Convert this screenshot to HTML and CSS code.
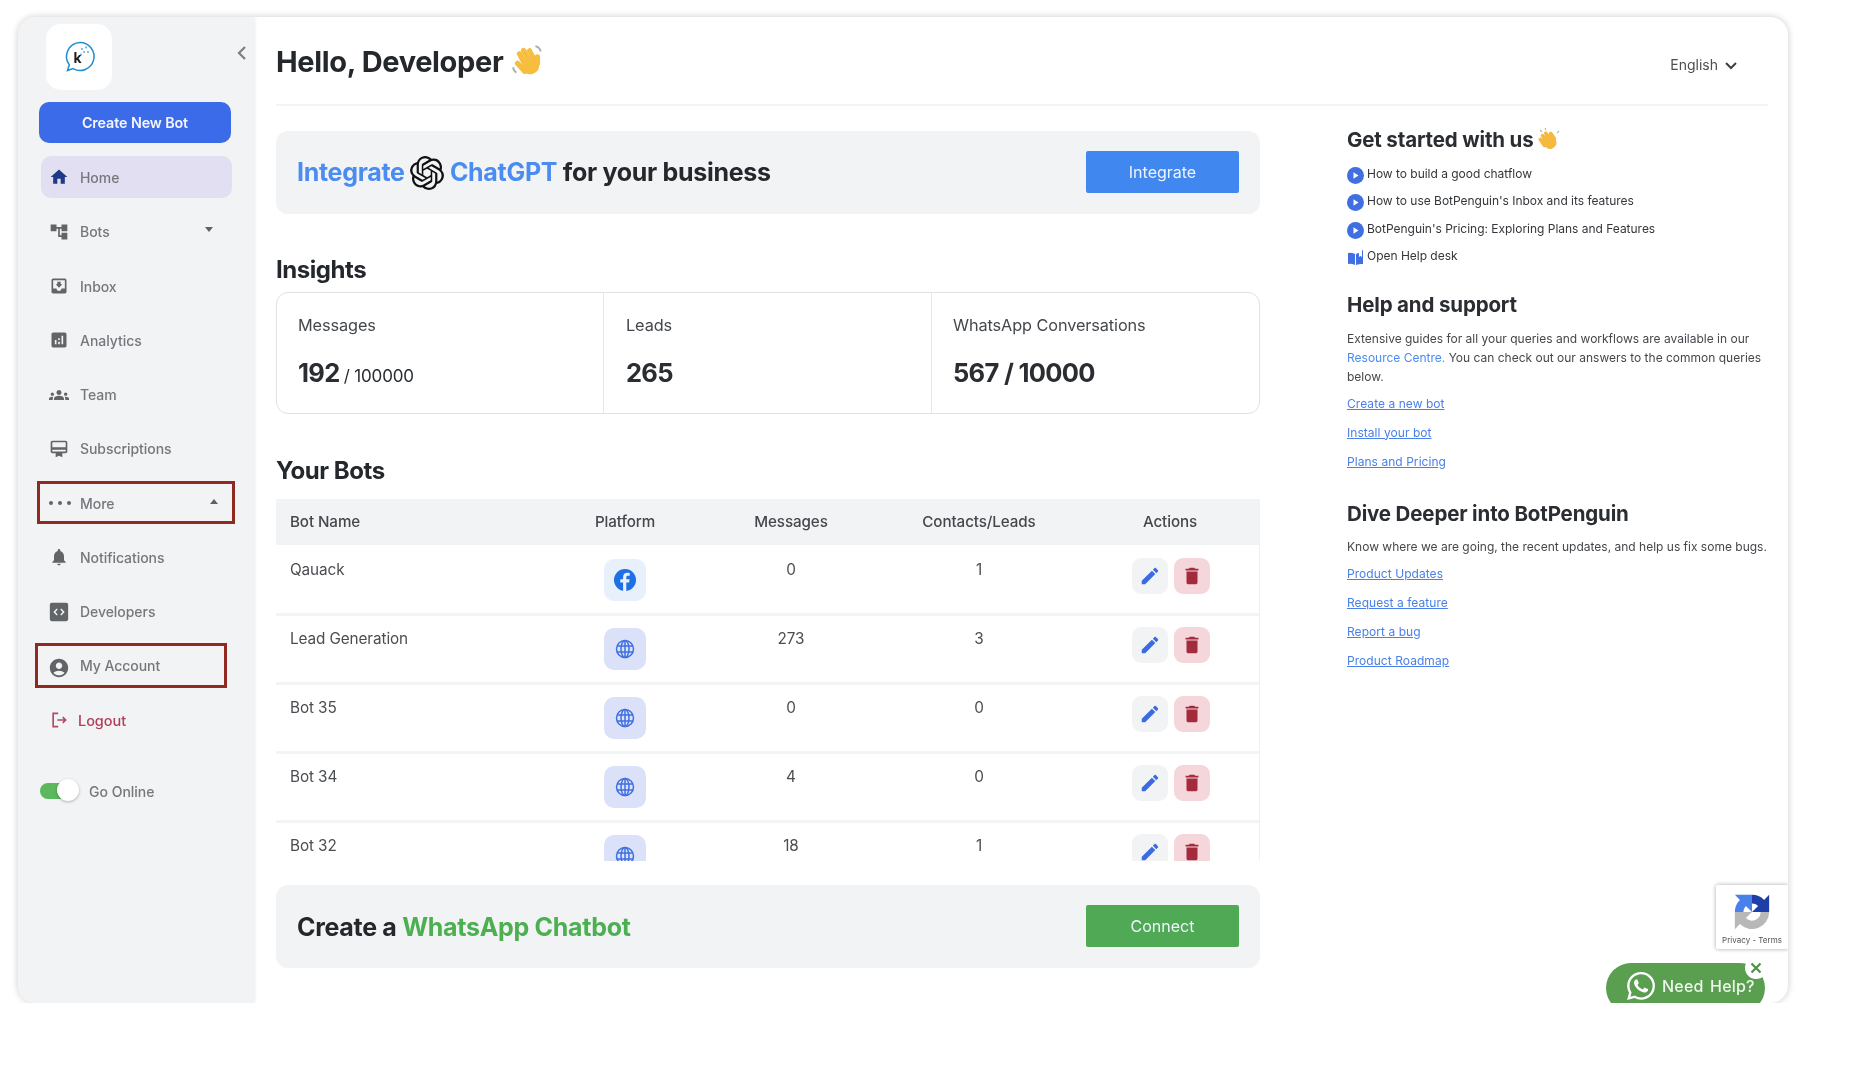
FILE: index.html
```html
<!DOCTYPE html>
<html lang="en">
<head>
<meta charset="utf-8">
<title>BotPenguin dashboard</title>
<link rel="stylesheet" href="styles.css">
</head>
<body>
<div class="window">
  <aside class="sidebar">
    <div class="logo-row">
      <div class="logo">
        <svg width="36" height="36" viewBox="0 0 36 36"><path d="M19 3.500a14 14 0 1 1-7 26.100L6.500 31.500l1.800-5.700A14 14 0 0 1 19 3.500z" fill="none" stroke="#1f8ecf" stroke-width="1.500"/><text x="12.500" y="24" class="logo-k">k</text><g fill="#4aa3df"><circle cx="21" cy="10" r=".9"/><circle cx="25" cy="8.500" r=".9"/><circle cx="23" cy="13" r=".9"/><circle cx="27" cy="13" r=".9"/><circle cx="20" cy="15.500" r=".9"/></g></svg>
      </div>
      <svg class="collapse" width="12" height="16" viewBox="0 0 12 16"><path d="M9 2 3 8l6 6" fill="none" stroke="#7b7e82" stroke-width="2.200"/></svg>
    </div>
    <button class="create">Create New Bot</button>
    <nav class="nav">
      <a class="item active"><svg class="ico" viewBox="0 0 24 24"><path d="M10 20v-6h4v6h5v-8h3L12 3 2 12h3v8z"/></svg><span>Home</span></a>
      <a class="item"><svg class="ico" viewBox="0 0 24 24"><path d="M22 11V3h-7v3H9V3H2v8h7V8h2v10h4v3h7v-8h-7v3h-2V8h2v3z"/></svg><span>Bots</span><i class="caret down"></i></a>
      <a class="item"><svg class="ico" viewBox="0 0 24 24"><path d="M19 3H4.990c-1.110 0-1.980.89-1.980 2L3 19c0 1.100.88 2 1.990 2H19c1.100 0 2-.9 2-2V5c0-1.110-.9-2-2-2zm0 12h-4c0 1.660-1.350 3-3 3s-3-1.340-3-3H4.990V5H19v10zm-3-5h-2V7h-4v3H8l4 4 4-4z"/></svg><span>Inbox</span></a>
      <a class="item"><svg class="ico" viewBox="0 0 24 24"><path d="M19 3H5c-1.100 0-2 .9-2 2v14c0 1.100.9 2 2 2h14c1.100 0 2-.9 2-2V5c0-1.100-.9-2-2-2zM9 17H7v-5h2v5zm4 0h-2v-3h2v3zm0-5h-2v-2h2v2zm4 5h-2V7h2v10z"/></svg><span>Analytics</span></a>
      <a class="item"><svg class="ico" viewBox="0 0 24 24"><path d="M12 12.750c1.630 0 3.070.39 4.240.9 1.080.48 1.760 1.560 1.760 2.730V18H6v-1.610c0-1.180.68-2.260 1.760-2.730 1.170-.52 2.610-.91 4.240-.91zM4 13c1.100 0 2-.9 2-2s-.9-2-2-2-2 .9-2 2 .9 2 2 2zm1.130 1.100c-.37-.06-.74-.1-1.130-.1-.99 0-1.930.21-2.780.58C.48 14.900 0 15.620 0 16.430V18h4.500v-1.610c0-.83.23-1.610.63-2.290zM20 13c1.100 0 2-.9 2-2s-.9-2-2-2-2 .9-2 2 .9 2 2 2zm4 3.430c0-.81-.48-1.530-1.220-1.850-.85-.37-1.790-.58-2.780-.58-.39 0-.76.04-1.130.1.4.68.63 1.460.63 2.290V18H24v-1.570zM12 6c1.660 0 3 1.340 3 3s-1.340 3-3 3-3-1.340-3-3 1.340-3 3-3z"/></svg><span>Team</span></a>
      <a class="item"><svg class="ico" viewBox="0 0 24 24"><path d="M20 2H4c-1.110 0-2 .89-2 2v11c0 1.110.89 2 2 2h4v5l4-2 4 2v-5h4c1.110 0 2-.89 2-2V4c0-1.110-.89-2-2-2zm0 13H4v-2h16v2zm0-5H4V4h16v6z"/></svg><span>Subscriptions</span></a>
      <a class="item"><span class="dots"><b></b><b></b><b></b></span><span>More</span><i class="caret up"></i></a>
      <a class="item"><svg class="ico" viewBox="0 0 24 24"><path d="M12 22c1.100 0 2-.9 2-2h-4c0 1.100.89 2 2 2zm6-6v-5c0-3.070-1.640-5.640-4.500-6.320V4c0-.83-.67-1.500-1.500-1.500s-1.500.67-1.500 1.500v.68C7.630 5.360 6 7.920 6 11v5l-2 2v1h16v-1l-2-2z"/></svg><span>Notifications</span></a>
      <a class="item"><svg class="ico big" viewBox="0 0 24 24"><path fill-rule="evenodd" d="M4 2h16a2 2 0 0 1 2 2v16a2 2 0 0 1-2 2H4a2 2 0 0 1-2-2V4a2 2 0 0 1 2-2zm6.600 7.400L9.500 8.300 5.800 12l3.700 3.700 1.100-1.100L8 12zm2.800 0L16 12l-2.600 2.600 1.100 1.100 3.700-3.700-3.700-3.700z"/></svg><span>Developers</span></a>
      <a class="item"><svg class="ico big shift" viewBox="0 0 24 24"><path d="M12 2C6.480 2 2 6.480 2 12s4.480 10 10 10 10-4.480 10-10S17.520 2 12 2zm0 4c1.930 0 3.500 1.570 3.500 3.500S13.930 13 12 13s-3.500-1.570-3.500-3.500S10.070 6 12 6zm0 14c-2.030 0-4.430-.82-6.140-2.880C7.550 15.800 9.680 15 12 15s4.450.8 6.140 2.120C16.430 19.180 14.030 20 12 20z"/></svg><span>My Account</span></a>
      <a class="item logout"><svg class="ico" viewBox="0 0 24 24"><path d="M11 4H5v16h6M10 12h10M16.500 8.500 20 12l-3.500 3.500" fill="none" stroke="#b04a60" stroke-width="2"/></svg><span>Logout</span></a>
    </nav>
    <div class="online"><span class="toggle"><i></i></span><span>Go Online</span></div>
    <div class="mark mark-more"></div>
    <div class="mark mark-account"></div>
  </aside>

  <main class="main">
    <header class="top">
      <h1>Hello, Developer
        <svg class="wave" width="36" height="36" viewBox="0 0 34 34"><g transform="rotate(-28 17 19)" fill="#f7bd3f"><rect x="7" y="12" width="5" height="15" rx="2.500" transform="rotate(-14 9 20)"/><rect x="11.500" y="5" width="5" height="18" rx="2.500"/><rect x="16.500" y="4" width="5" height="19" rx="2.500"/><rect x="21.500" y="7" width="4.600" height="16" rx="2.300"/><rect x="10" y="15" width="16" height="15" rx="7"/><rect x="24" y="15" width="5" height="11" rx="2.500" transform="rotate(28 26 20)"/></g><path d="M24 3q4 1 5 5M3 23q0 3 3 5" fill="none" stroke="#a9adb3" stroke-width="1.800"/></svg>
      </h1>
      <div class="lang"><span>English</span><svg width="14" height="10" viewBox="0 0 14 10"><path d="m2 2 5 5 5-5" fill="none" stroke="#3d4044" stroke-width="2"/></svg></div>
    </header>
    <div class="columns">
      <section class="left">
        <div class="banner">
          <div class="banner-title"><span class="blue">Integrate</span> <svg class="gpt" width="34" height="34" viewBox="0 0 24 24"><path fill="#111" d="M22.282 9.821a5.985 5.985 0 0 0-.516-4.911 6.046 6.046 0 0 0-6.510-2.900A6.065 6.065 0 0 0 4.981 4.182a5.985 5.985 0 0 0-3.998 2.900 6.046 6.046 0 0 0 .743 7.097 5.980 5.980 0 0 0 .511 4.911 6.051 6.051 0 0 0 6.515 2.900A5.985 5.985 0 0 0 13.260 24a6.056 6.056 0 0 0 5.772-4.206 5.990 5.990 0 0 0 3.998-2.900 6.056 6.056 0 0 0-.748-7.073zM13.260 22.429a4.476 4.476 0 0 1-2.876-1.041l.142-.080 4.778-2.758a.795.795 0 0 0 .393-.681v-6.737l2.020 1.169a.071.071 0 0 1 .038.052v5.583a4.504 4.504 0 0 1-4.495 4.494zm-9.661-4.125a4.471 4.471 0 0 1-.535-3.014l.142.085 4.783 2.758a.771.771 0 0 0 .781 0l5.843-3.368v2.332a.080.080 0 0 1-.033.062L9.740 19.950a4.499 4.499 0 0 1-6.141-1.646zM2.341 7.896a4.485 4.485 0 0 1 2.366-1.973V11.600a.766.766 0 0 0 .388.677l5.814 3.354-2.020 1.169a.076.076 0 0 1-.071 0l-4.830-2.787A4.504 4.504 0 0 1 2.341 7.872zm16.596 3.856-5.833-3.388L15.119 7.200a.076.076 0 0 1 .071 0l4.830 2.791a4.494 4.494 0 0 1-.676 8.104v-5.677a.790.790 0 0 0-.407-.667zm2.011-3.023-.142-.085-4.774-2.782a.776.776 0 0 0-.785 0L9.409 9.230V6.897a.066.066 0 0 1 .028-.062l4.830-2.787a4.499 4.499 0 0 1 6.680 4.660zM8.307 12.863l-2.020-1.164a.080.080 0 0 1-.038-.057V6.074a4.499 4.499 0 0 1 7.376-3.454l-.142.081L8.704 5.459a.795.795 0 0 0-.393.681zm1.098-2.365 2.602-1.500 2.607 1.500v2.999l-2.597 1.500-2.607-1.500z"/></svg> <span class="blue">ChatGPT</span> for your business</div>
          <button class="btn btn-blue">Integrate</button>
        </div>

        <h2 class="sec sec-insights">Insights</h2>
        <div class="insights">
          <div class="cell"><div class="lbl">Messages</div><div class="val">192 <small>/ 100000</small></div></div>
          <div class="cell"><div class="lbl">Leads</div><div class="val">265</div></div>
          <div class="cell"><div class="lbl">WhatsApp Conversations</div><div class="val">567 / 10000</div></div>
        </div>

        <h2 class="sec sec-bots">Your Bots</h2>
        <div class="table">
          <div class="row head"><span class="name">Bot Name</span><span>Platform</span><span>Messages</span><span>Contacts/Leads</span><span class="act-h">Actions</span></div>

          <div class="row"><span class="name">Qauack</span>
            <span class="pf fb"><svg width="24" height="24" viewBox="0 0 24 24"><circle cx="12" cy="12" r="11" fill="#1f6fe5"/><path d="M13.300 23v-8.600h2.800l.5-3.200h-3.300V9.300c0-.9.4-1.600 1.700-1.600h1.700V5c-.8-.1-1.600-.2-2.400-.2-2.600 0-4.200 1.500-4.200 4.200v2.200H7.300v3.200h2.800V23z" fill="#e9f1fb"/></svg></span>
            <span>0</span><span>1</span>
            <span class="acts"><b class="ab edit"><svg width="22" height="22" viewBox="0 0 24 24"><path d="M3 17.250V21h3.750L17.810 9.940l-3.750-3.750L3 17.250zM20.710 7.040c.39-.39.39-1.020 0-1.410l-2.340-2.340c-.39-.39-1.020-.39-1.410 0l-1.830 1.830 3.750 3.750 1.830-1.830z"/></svg></b><b class="ab del"><svg width="22" height="22" viewBox="0 0 24 24"><path d="M6 19c0 1.100.9 2 2 2h8c1.100 0 2-.9 2-2V7H6v12zM19 4h-3.500l-1-1h-5l-1 1H5v2h14V4z"/></svg></b></span></div>

          <div class="row"><span class="name">Lead Generation</span>
            <span class="pf web"><svg width="20" height="20" viewBox="0 0 20 20"><g fill="none" stroke="#3f6fe0" stroke-width="1.500"><circle cx="10" cy="10" r="8.500"/><ellipse cx="10" cy="10" rx="4" ry="8.500"/><path d="M10 1.500v17M2 7h16M2 13h16"/></g></svg></span>
            <span>273</span><span>3</span>
            <span class="acts"><b class="ab edit"><svg width="22" height="22" viewBox="0 0 24 24"><path d="M3 17.250V21h3.750L17.810 9.940l-3.750-3.750L3 17.250zM20.710 7.040c.39-.39.39-1.020 0-1.410l-2.340-2.340c-.39-.39-1.020-.39-1.410 0l-1.830 1.830 3.750 3.750 1.830-1.830z"/></svg></b><b class="ab del"><svg width="22" height="22" viewBox="0 0 24 24"><path d="M6 19c0 1.100.9 2 2 2h8c1.100 0 2-.9 2-2V7H6v12zM19 4h-3.500l-1-1h-5l-1 1H5v2h14V4z"/></svg></b></span></div>

          <div class="row"><span class="name">Bot 35</span>
            <span class="pf web"><svg width="20" height="20" viewBox="0 0 20 20"><g fill="none" stroke="#3f6fe0" stroke-width="1.500"><circle cx="10" cy="10" r="8.500"/><ellipse cx="10" cy="10" rx="4" ry="8.500"/><path d="M10 1.500v17M2 7h16M2 13h16"/></g></svg></span>
            <span>0</span><span>0</span>
            <span class="acts"><b class="ab edit"><svg width="22" height="22" viewBox="0 0 24 24"><path d="M3 17.250V21h3.750L17.810 9.940l-3.750-3.750L3 17.250zM20.710 7.040c.39-.39.39-1.020 0-1.410l-2.340-2.340c-.39-.39-1.020-.39-1.410 0l-1.830 1.830 3.750 3.750 1.830-1.830z"/></svg></b><b class="ab del"><svg width="22" height="22" viewBox="0 0 24 24"><path d="M6 19c0 1.100.9 2 2 2h8c1.100 0 2-.9 2-2V7H6v12zM19 4h-3.500l-1-1h-5l-1 1H5v2h14V4z"/></svg></b></span></div>

          <div class="row"><span class="name">Bot 34</span>
            <span class="pf web"><svg width="20" height="20" viewBox="0 0 20 20"><g fill="none" stroke="#3f6fe0" stroke-width="1.500"><circle cx="10" cy="10" r="8.500"/><ellipse cx="10" cy="10" rx="4" ry="8.500"/><path d="M10 1.500v17M2 7h16M2 13h16"/></g></svg></span>
            <span>4</span><span>0</span>
            <span class="acts"><b class="ab edit"><svg width="22" height="22" viewBox="0 0 24 24"><path d="M3 17.250V21h3.750L17.810 9.940l-3.750-3.750L3 17.250zM20.710 7.040c.39-.39.39-1.020 0-1.410l-2.340-2.340c-.39-.39-1.020-.39-1.410 0l-1.830 1.830 3.750 3.750 1.830-1.830z"/></svg></b><b class="ab del"><svg width="22" height="22" viewBox="0 0 24 24"><path d="M6 19c0 1.100.9 2 2 2h8c1.100 0 2-.9 2-2V7H6v12zM19 4h-3.500l-1-1h-5l-1 1H5v2h14V4z"/></svg></b></span></div>

          <div class="row"><span class="name">Bot 32</span>
            <span class="pf web"><svg width="20" height="20" viewBox="0 0 20 20"><g fill="none" stroke="#3f6fe0" stroke-width="1.500"><circle cx="10" cy="10" r="8.500"/><ellipse cx="10" cy="10" rx="4" ry="8.500"/><path d="M10 1.500v17M2 7h16M2 13h16"/></g></svg></span>
            <span>18</span><span>1</span>
            <span class="acts"><b class="ab edit"><svg width="22" height="22" viewBox="0 0 24 24"><path d="M3 17.250V21h3.750L17.810 9.940l-3.750-3.750L3 17.250zM20.710 7.040c.39-.39.39-1.020 0-1.410l-2.340-2.340c-.39-.39-1.020-.39-1.410 0l-1.830 1.830 3.750 3.750 1.830-1.830z"/></svg></b><b class="ab del"><svg width="22" height="22" viewBox="0 0 24 24"><path d="M6 19c0 1.100.9 2 2 2h8c1.100 0 2-.9 2-2V7H6v12zM19 4h-3.500l-1-1h-5l-1 1H5v2h14V4z"/></svg></b></span></div>
        </div>

        <div class="banner banner-wa">
          <div class="banner-title">Create a <span class="green">WhatsApp Chatbot</span></div>
          <button class="btn btn-green">Connect</button>
        </div>
      </section>

      <aside class="right">
        <h3 class="h-first">Get started with us
          <svg width="24" height="24" viewBox="0 0 24 24"><g fill="#f5b93f" transform="rotate(-35 12 13)"><rect x="6" y="6" width="12" height="15" rx="5"/><rect x="4" y="5" width="3.500" height="11" rx="1.700"/><rect x="8" y="3" width="3.500" height="10" rx="1.700"/><rect x="12" y="3" width="3.500" height="10" rx="1.700"/><rect x="16" y="6" width="3.500" height="10" rx="1.700"/></g><path d="M5 4 3 2M9 2 8 0M20 5l2-2" stroke="#b5b7ba" stroke-width="1.200"/></svg>
        </h3>
        <ul class="guides">
          <li><svg width="17" height="17" viewBox="0 0 17 17"><circle cx="8.500" cy="8.500" r="8.500" fill="#3f6fe0"/><path d="M6.500 5.200v6.600l5-3.300z" fill="#fff"/></svg><span>How to build a good chatflow</span></li>
          <li><svg width="17" height="17" viewBox="0 0 17 17"><circle cx="8.500" cy="8.500" r="8.500" fill="#3f6fe0"/><path d="M6.500 5.200v6.600l5-3.300z" fill="#fff"/></svg><span>How to use BotPenguin's Inbox and its features</span></li>
          <li><svg width="17" height="17" viewBox="0 0 17 17"><circle cx="8.500" cy="8.500" r="8.500" fill="#3f6fe0"/><path d="M6.500 5.200v6.600l5-3.300z" fill="#fff"/></svg><span>BotPenguin's Pricing: Exploring Plans and Features</span></li>
          <li><svg width="17" height="17" viewBox="0 0 17 17"><path d="M1 4q3-1 7 1v11q-4-2-7-1z" fill="#3f6fe0"/><path d="M9 5q2-1 3-1v4l1.500-1L15 8V1l1 .5v13.500q-3-.5-7 1z" fill="#3f6fe0"/></svg><span>Open Help desk</span></li>
        </ul>
        <h3 class="h-help">Help and support</h3>
        <p class="para">Extensive guides for all your queries and workflows are available in our <span class="res">Resource Centre.</span> You can check out our answers to the common queries below.</p>
        <ul class="links links-help">
          <li><a>Create a new bot</a></li>
          <li><a>Install your bot</a></li>
          <li><a>Plans and Pricing</a></li>
        </ul>
        <h3 class="h-dive">Dive Deeper into BotPenguin</h3>
        <p class="para para-dive">Know where we are going, the recent updates, and help us fix some bugs.</p>
        <ul class="links">
          <li><a>Product Updates</a></li>
          <li><a>Request a feature</a></li>
          <li><a>Report a bug</a></li>
          <li><a>Product Roadmap</a></li>
        </ul>
      </aside>
    </div>
  </main>

  <div class="recaptcha">
    <svg width="40" height="40" viewBox="0 0 42 42"><path d="M39 21A18 18 0 0 1 8.300 33.700L3 39V21H21L14.600 27.400A9 9 0 0 0 30 21Z" fill="#b8b8b8"/><path d="M3 21A18 18 0 0 1 8.300 8.300L3 3H21V21L14.600 14.600A9 9 0 0 0 12 21Z" fill="#4a80ea"/><path d="M21 3A18 18 0 0 1 33.700 8.300L39 3V21H21L27.400 14.600A9 9 0 0 0 21 12Z" fill="#1f3fa8"/></svg>
    <div class="rc-text">Privacy - Terms</div>
  </div>
  <div class="help-pill">
    <svg width="28" height="28" viewBox="0 0 24 24"><path fill="#fff" d="M17.472 14.382c-.297-.149-1.758-.867-2.030-.967-.273-.099-.471-.148-.670.150-.197.297-.767.966-.940 1.164-.173.199-.347.223-.644.075-.297-.150-1.255-.463-2.390-1.475-.883-.788-1.480-1.761-1.653-2.059-.173-.297-.018-.458.130-.606.134-.133.298-.347.446-.520.149-.174.198-.298.298-.497.099-.198.050-.371-.025-.520-.075-.149-.669-1.612-.916-2.207-.242-.579-.487-.500-.669-.510-.173-.008-.371-.010-.570-.010-.198 0-.520.074-.792.372-.272.297-1.040 1.016-1.040 2.479 0 1.462 1.065 2.875 1.213 3.074.149.198 2.096 3.200 5.077 4.487.709.306 1.262.489 1.694.625.712.227 1.360.195 1.871.118.571-.085 1.758-.719 2.006-1.413.248-.694.248-1.289.173-1.413-.074-.124-.272-.198-.570-.347m-5.421 7.403h-.004a9.870 9.870 0 0 1-5.031-1.378l-.361-.214-3.741.982.998-3.648-.235-.374a9.860 9.860 0 0 1-1.510-5.260c.001-5.450 4.436-9.884 9.888-9.884 2.640 0 5.122 1.030 6.988 2.898a9.825 9.825 0 0 1 2.893 6.994c-.003 5.450-4.437 9.884-9.885 9.884m8.413-18.297A11.815 11.815 0 0 0 12.050 0C5.495 0 .160 5.335.157 11.892c0 2.096.547 4.142 1.588 5.945L.057 24l6.305-1.654a11.882 11.882 0 0 0 5.683 1.448h.005c6.554 0 11.890-5.335 11.893-11.893a11.821 11.821 0 0 0-3.480-8.413z"/></svg>
    <span>Need Help?</span>
  </div>
  <div class="help-close"><svg width="12" height="12" viewBox="0 0 12 12"><path d="m1.500 1.500 9 9m0-9-9 9" stroke="#4f8f47" stroke-width="2.200"/></svg></div>
</div>
</body>
</html>
```
FILE: styles.css
```css
* { box-sizing: border-box; }
html, body { margin: 0; background: #fff; }
body { padding: 17px 0 0 18px; font-family: Inter, "Liberation Sans", sans-serif; color: #2a2d31; }
h1, h2, h3, p, ul { margin: 0; padding: 0; }
ul { list-style: none; }
button { font-family: inherit; border: 0; }

.window { position: relative; display: flex; width: 1770px; height: 986px; background: #fff; border-radius: 18px; overflow: hidden; box-shadow: 0 0 6px 1px rgba(0,0,0,.16); filter: blur(.55px); }

/* Sidebar */
.sidebar { position: relative; flex: 0 0 236px; background: #f2f3f5; padding: 7px 0 0 21px; box-shadow: 1px 0 3px rgba(0,0,0,.08); }
.logo-row { display: flex; align-items: flex-start; padding-left: 7px; }
.logo { width: 66px; height: 66px; background: #fff; border-radius: 15px; display: flex; align-items: center; justify-content: center; }
.logo-k { font: 700 14px Inter, sans-serif; fill: #1c1c1c; }
.collapse { margin: 21px 0 0 124px; }
.create { display: block; width: 192px; height: 41px; margin-top: 12px; background: #3b6be8; color: #f4f6fe; border-radius: 10px; font-size: 14.300px; font-weight: 600; letter-spacing: -.1px; }
.nav { display: flex; flex-direction: column; margin-top: 13px; margin-left: 2px; width: 191px; }
.item { display: flex; align-items: center; height: 41px; margin-bottom: 13.250px; padding-left: 8px; font-size: 14px; font-weight: 500; color: #74777b; border-radius: 10px; letter-spacing: -.05px; }
.item.active { background: #e3dff2; height: 42px; }
.item.active .ico { fill: #1f3a85; }
.ico { width: 20px; height: 20px; margin-right: 11px; flex: none; fill: #626568; }
.ico.big { width: 22px; height: 22px; margin-left: -1px; margin-right: 10px; }
.ico.shift { margin-top: 5px; }
.dots { display: flex; gap: 5px; width: 20px; margin-right: 11px; }
.dots b { width: 4px; height: 4px; border-radius: 50%; background: #626568; flex: none; }
.caret { width: 0; height: 0; margin-left: auto; border-left: 4.500px solid transparent; border-right: 4.500px solid transparent; }
.caret.down { border-top: 5px solid #5e6165; margin-right: 19px; margin-top: -4px; }
.caret.up { border-bottom: 5px solid #5e6165; margin-right: 14px; margin-top: -4px; }
.logout { color: #ae4058; font-size: 14.500px; }
.logout span { margin-left: -2px; }
.online { display: flex; align-items: center; gap: 11px; margin-top: 29px; font-size: 14px; font-weight: 500; color: #74777b; }
.toggle { position: relative; display: block; width: 38px; height: 16px; margin-left: 1px; background: #5cb85c; border-radius: 8px; }
.toggle i { position: absolute; right: -1px; top: -4px; width: 22px; height: 22px; border-radius: 50%; background: #fff; box-shadow: 0 1px 3px rgba(0,0,0,.28); }
.mark { position: absolute; border: 3px solid #8e2a1f; }
.mark-more { left: 19px; top: 464px; width: 198px; height: 43px; }
.mark-account { left: 17px; top: 626px; width: 192px; height: 45px; }

/* Main */
.main { flex: 1; display: flex; flex-direction: column; padding: 0 20px 0 22px; min-width: 0; }
.top { display: flex; align-items: center; justify-content: space-between; height: 89px; border-bottom: 2px solid #f3f4f6; padding: 2px 30px 0 0; }
.top h1 { display: flex; align-items: center; gap: 7px; font-size: 29px; font-weight: 700; color: #24272b; letter-spacing: -.35px; margin-top: -1px; }
.lang { display: flex; align-items: center; gap: 6px; font-size: 14px; color: #4b4e52; margin-top: 5px; }
.lang svg { margin-top: 4px; }
.columns { display: flex; gap: 87px; }
.left { flex: 0 0 984px; padding-top: 25px; }
.right { flex: 0 0 421px; padding-top: 21px; }

.banner { display: flex; align-items: center; justify-content: space-between; height: 83px; padding: 0 21px; background: #f2f3f5; border-radius: 12px; }
.banner-title { font-size: 25px; line-height: 34px; font-weight: 700; color: #24272b; letter-spacing: -.3px; }
.gpt { vertical-align: -9px; }
.blue { color: #4a8cf0; }
.green { color: #4caf50; }
.btn { width: 153px; height: 42px; margin-top: -1px; border-radius: 2px; color: #eef4fe; font-size: 16px; font-weight: 400; }
.btn-blue { background: #4088f0; }
.btn-green { background: #50a954; }
.banner-wa { margin-top: 24px; }

.sec { font-size: 24px; line-height: 28px; font-weight: 700; color: #24272b; letter-spacing: -.45px; }
.sec-insights { margin: 42px 0 8px; }
.sec-bots { margin: 43px 0 14px; }

.insights { display: grid; grid-template-columns: 327px 328px 1fr; height: 122px; border: 1.500px solid #dfe1e4; border-radius: 12px; }
.cell { padding: 22px 0 0 21px; border-right: 1.500px solid #e4e6e8; }
.cell:nth-child(2) { padding-left: 22px; }
.cell:last-child { border-right: 0; }
.lbl { font-size: 16.300px; line-height: 20px; color: #44474b; letter-spacing: -.1px; }
.val { margin-top: 22px; font-size: 25.500px; line-height: 32px; font-weight: 700; color: #2a2d31; letter-spacing: -.7px; }
.val small { font-size: 17px; font-weight: 400; letter-spacing: -.2px; margin-left: -1px; }

.table { height: 362px; overflow: hidden; border-right: 1.500px solid #f0f1f3; width: 984px; }
.row { display: grid; grid-template-columns: 274px 150px 182px 194px 1fr; align-items: start; height: 69px; padding-top: 12px; border-top: 3px solid #f3f4f6; font-size: 15.300px; color: #4a4d51; text-align: center; letter-spacing: -.1px; }
.row > span { display: block; line-height: 22px; }
.row .name { text-align: left; padding-left: 14px; }
.row.head { height: 46px; padding-top: 12px; background: #f2f3f5; border-top: 0; color: #44474b; font-weight: 500; font-size: 15.200px; }
.head + .row { height: 68px; padding-top: 14px; border-top: 0; }
.act-h { padding-left: 5px; }
.pf { width: 42px; height: 42px; border-radius: 10px; margin: 0 auto; display: flex !important; align-items: center; justify-content: center; }
.fb { background: #e8f0fb; }
.web { background: #dbe1f8; }
.acts { display: flex !important; gap: 6px; justify-content: center; padding-left: 6px; margin-top: -1px; }
.ab { width: 36px; height: 36px; border-radius: 9px; display: flex; align-items: center; justify-content: center; }
.edit { background: #f2f3f5; fill: #3b6be0; }
.del { background: #f5d7db; fill: #a32b3c; }

/* Right column */
h3 { font-size: 20.500px; line-height: 26px; font-weight: 700; color: #2a2d31; letter-spacing: -.15px; }
.h-first { display: flex; align-items: center; gap: 3px; }
.h-help { margin-top: 17px; }
.h-dive { margin-top: 20px; }
.guides { margin-top: 13px; }
.guides li { display: flex; align-items: flex-start; gap: 3px; height: 27.300px; font-size: 12px; line-height: 16px; color: #33363a; letter-spacing: -.02px; }
.guides svg { margin-top: 1px; flex: none; }
.para { margin-top: 11px; font-size: 12px; line-height: 19px; color: #44474b; letter-spacing: 0; }
.para-dive { margin-top: 10px; }
.res { color: #4a8cf0; }
.links { margin-top: 8px; }
.links li { height: 29px; line-height: 19px; font-size: 12px; letter-spacing: .05px; }
.links a { color: #4a80e8; text-decoration: underline; }
.links-help { margin-top: 7.500px; }

/* Floating widgets */
.recaptcha { position: absolute; right: 0; top: 868px; width: 72px; height: 64px; background: #fff; box-shadow: 0 0 4px rgba(0,0,0,.35); border-radius: 2px 0 0 2px; text-align: center; padding-top: 7px; }
.recaptcha svg { display: block; margin: 0 auto; }
.rc-text { font-size: 8px; line-height: 12px; color: #555; margin-top: 2px; white-space: nowrap; }
.help-pill { position: absolute; left: 1588px; top: 946px; width: 159px; height: 50px; border-radius: 25px; background: #5a9e50; color: #eef6ec; display: flex; align-items: flex-start; gap: 7px; padding: 9px 0 0 21px; font-size: 16px; font-weight: 500; word-spacing: 2px; letter-spacing: .2px; }
.help-pill span { margin-top: 4px; }
.help-close { position: absolute; left: 1727px; top: 940px; width: 22px; height: 22px; border-radius: 50%; background: #fff; display: flex; align-items: center; justify-content: center; }
```
